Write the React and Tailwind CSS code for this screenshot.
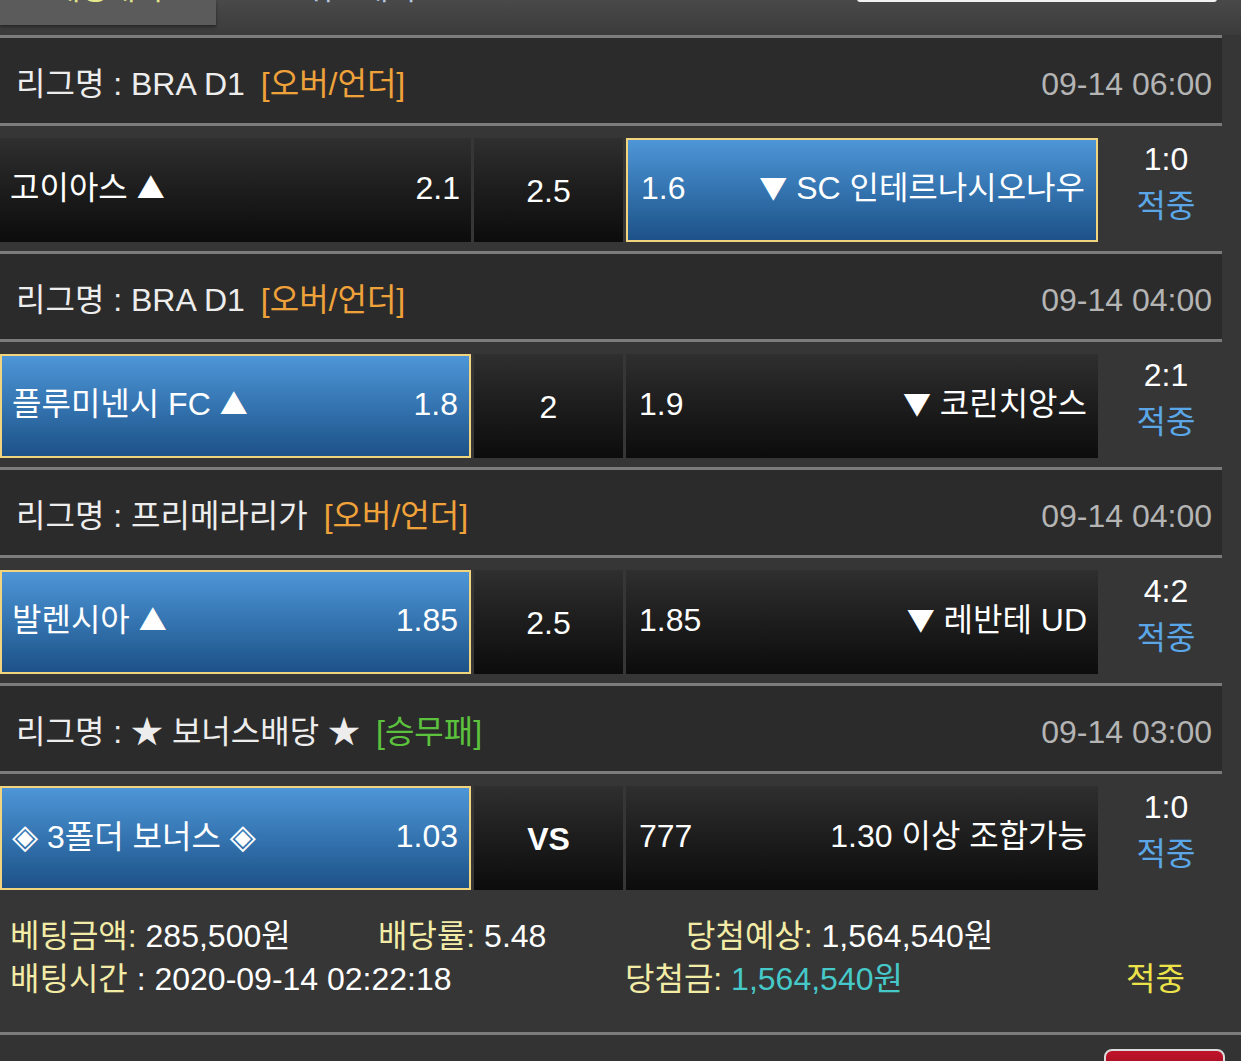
import React from "react";

const FONT = { fontFamily: '"Liberation Sans", "Noto Sans CJK KR", "Noto Sans", sans-serif' };

const Tri = ({ c }) => (
  <span className="font-['Noto_Sans_CJK_KR',sans-serif] text-[28px] leading-none">{c}</span>
);
const Dia = () => (
  <span className="font-['DejaVu_Sans',sans-serif] text-[34px] leading-none">◈</span>
);

const matches = [
  {
    league: "BRA D1",
    tag: "[오버/언더]",
    tagColor: "text-[#f0a23a]",
    time: "09-14 06:00",
    home: <>고이아스 <Tri c="▲" /></>,
    homeOdd: "2.1",
    mid: "2.5",
    awayOdd: "1.6",
    away: <><Tri c="▼" /> SC 인테르나시오나우</>,
    pick: "away",
    score: "1:0",
  },
  {
    league: "BRA D1",
    tag: "[오버/언더]",
    tagColor: "text-[#f0a23a]",
    time: "09-14 04:00",
    home: <>플루미넨시 FC <Tri c="▲" /></>,
    homeOdd: "1.8",
    mid: "2",
    awayOdd: "1.9",
    away: <><Tri c="▼" /> 코린치앙스</>,
    pick: "home",
    score: "2:1",
  },
  {
    league: "프리메라리가",
    tag: "[오버/언더]",
    tagColor: "text-[#f0a23a]",
    time: "09-14 04:00",
    home: <>발렌시아 <Tri c="▲" /></>,
    homeOdd: "1.85",
    mid: "2.5",
    awayOdd: "1.85",
    away: <><Tri c="▼" /> 레반테 UD</>,
    pick: "home",
    score: "4:2",
  },
  {
    league: "★ 보너스배당 ★",
    tag: "[승무패]",
    tagColor: "text-[#5cc23e]",
    time: "09-14 03:00",
    home: <><Dia /> 3폴더 보너스 <Dia /></>,
    homeOdd: "1.03",
    mid: "VS",
    awayOdd: "777",
    away: "1.30 이상 조합가능",
    pick: "home",
    score: "1:0",
  },
];

const Line = ({ full }) => (
  <div className={(full ? "w-full" : "w-[1222px]") + " h-[3px] bg-[#7c7c7c]"} />
);

const darkCell = "bg-gradient-to-b from-[#2f2f2f] to-[#0c0c0c]";
const blueCell =
  "bg-gradient-to-b from-[#4e96d8] via-[#3474b0] to-[#1d5288] border-2 border-[#f2d37e]";

function Match({ m, last }) {
  return (
    <>
      <div className="w-[1222px] h-[85px] bg-[#2b2b2b] flex items-center justify-between pl-[16px] pr-[10px] pt-[6px]">
        <div className="flex items-center text-[#ededed]">
          <span>리그명 : {m.league}</span>
          <span className={"ml-[16px] " + m.tagColor}>{m.tag}</span>
        </div>
        <div className="text-[#b4b4b4]">{m.time}</div>
      </div>
      <Line />
      <div className="w-[1222px] h-[125px] pt-[12px] pb-[9px] flex">
        <div
          className={
            "w-[471px] h-full flex items-center justify-between pl-[10px] pr-[11px] pb-[4px] text-white " +
            (m.pick === "home" ? blueCell : darkCell)
          }
        >
          <span>{m.home}</span>
          <span>{m.homeOdd}</span>
        </div>
        <div
          className={
            "ml-[3px] w-[149px] h-full flex items-center justify-center text-white pt-[1px] " +
            darkCell +
            (m.mid === "VS" ? " font-bold" : "")
          }
        >
          {m.mid}
        </div>
        <div
          className={
            "ml-[3px] w-[472px] h-full flex items-center justify-between pl-[13px] pr-[11px] pb-[4px] text-white " +
            (m.pick === "away" ? blueCell : darkCell)
          }
        >
          <span>{m.awayOdd}</span>
          <span>{m.away}</span>
        </div>
        <div className="flex-1 h-full flex flex-col items-center justify-center pl-[12px] leading-[47px] pb-[14px]">
          <span className="text-white">{m.score}</span>
          <span className="text-[#5aa6e6]">적중</span>
        </div>
      </div>
      {!last && <Line />}
    </>
  );
}

export default function App() {
  return (
    <div
      className="w-[1241px] h-[1061px] overflow-hidden bg-[#363636] text-[32px] leading-none"
      style={FONT}
    >
      {/* top tab strip */}
      <div className="h-[35px] w-full bg-gradient-to-b from-[#494949] to-[#3b3b3b] overflow-hidden">
        <div className="flex h-[25px]">
          <div className="w-[216px] h-[25px] bg-[#5b5b5b] shadow-[0_2px_3px_rgba(0,0,0,0.4)] overflow-hidden flex justify-center">
            <span className="-mt-[26px] text-[#e4ea8a] text-[30px] leading-[30px]">배팅내역</span>
          </div>
          <div className="w-[290px] overflow-hidden flex justify-center">
            <span className="-mt-[26px] text-[#b8c8e0] text-[30px] leading-[30px]">취소내역</span>
          </div>
          <div className="flex-1" />
          <div className="w-[360px] h-[3px] mr-[24px] -mt-[1px] bg-[#f2f2f2] rounded-b-[6px]" />
        </div>
      </div>
      <Line />
      {matches.map((m, i) => (
        <Match key={i} m={m} last={i === matches.length - 1} />
      ))}
      {/* summary */}
      <div className="h-[133px] pt-[16px] pl-[10px] pr-[10px] leading-[43px]">
        <div className="flex">
          <div className="w-[368px]">
            <span className="text-[#f2eca6]">베팅금액:</span>
            <span className="text-white"> 285,500원</span>
          </div>
          <div className="w-[308px]">
            <span className="text-[#f2eca6]">배당률:</span>
            <span className="text-white"> 5.48</span>
          </div>
          <div>
            <span className="text-[#f2eca6]">당첨예상:</span>
            <span className="text-white"> 1,564,540원</span>
          </div>
        </div>
        <div className="flex">
          <div className="w-[615px]">
            <span className="text-[#f2eca6]">배팅시간</span>
            <span className="text-white"> : 2020-09-14 02:22:18</span>
          </div>
          <div className="flex-1">
            <span className="text-[#f2eca6]">당첨금:</span>
            <span className="text-[#45c9c9]"> 1,564,540원</span>
          </div>
          <div className="pr-[46px] text-[#ece24a]">적중</div>
        </div>
      </div>
      <Line full />
      <div className="bg-[#333333] h-[40px] flex justify-end pr-[16px] pt-[14px]">
        <div className="w-[121px] h-[40px] rounded-[8px] border-2 border-[#dcdcdc] bg-gradient-to-b from-[#c0142a] to-[#8a0a18]" />
      </div>
    </div>
  );
}
